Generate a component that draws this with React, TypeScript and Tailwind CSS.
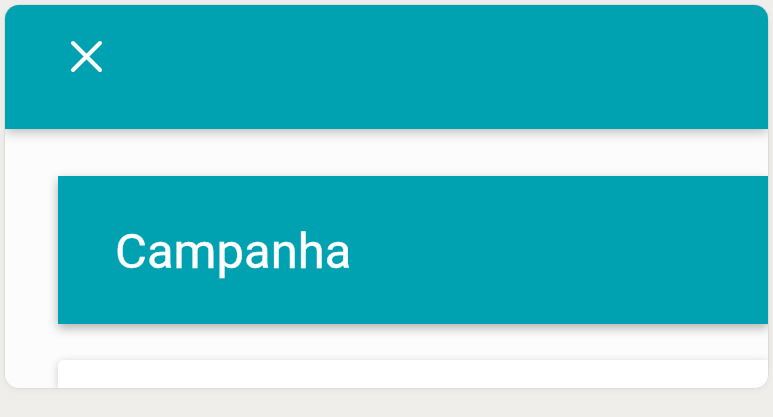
import React from "react";

export default function App() {
  return (
    <div className="w-[773px] h-[417px] bg-[#efeeeb] pt-[4px] pl-[4px] overflow-hidden" style={{ fontFamily: "Roboto, 'Liberation Sans', sans-serif" }}>
      <div className="w-[765px] h-[385px] rounded-[15px] border border-[#e0ddd8] bg-[#fcfcfc] overflow-hidden flex flex-col shadow-[0_2px_6px_rgba(0,0,0,0.04)]">
        <div className="relative z-10 h-[124px] shrink-0 bg-[#00a2b1] shadow-[0_2px_12px_rgba(0,0,0,0.3)] flex items-start pl-[65px] pt-[35px]">
          <svg width="33" height="33" viewBox="0 0 33 33" fill="none">
            <path d="M3 3L30 30M30 3L3 30" stroke="white" strokeWidth="4" strokeLinecap="round" />
          </svg>
        </div>
        <div className="flex-1 pl-[53px] pt-[47px] flex flex-col gap-[36px] bg-[#fcfcfc]">
          <div className="h-[148px] shrink-0 bg-[#00a2b1] shadow-[0_4px_10px_rgba(0,0,0,0.3)] flex items-center pl-[57px]">
            <span className="text-white text-[49px] leading-none pt-[2px] [-webkit-text-stroke:0.4px_white]">Campanha</span>
          </div>
          <div className="flex-1 bg-white rounded-tl-[6px] shadow-[0_2px_8px_rgba(0,0,0,0.2)]" />
        </div>
      </div>
    </div>
  );
}
